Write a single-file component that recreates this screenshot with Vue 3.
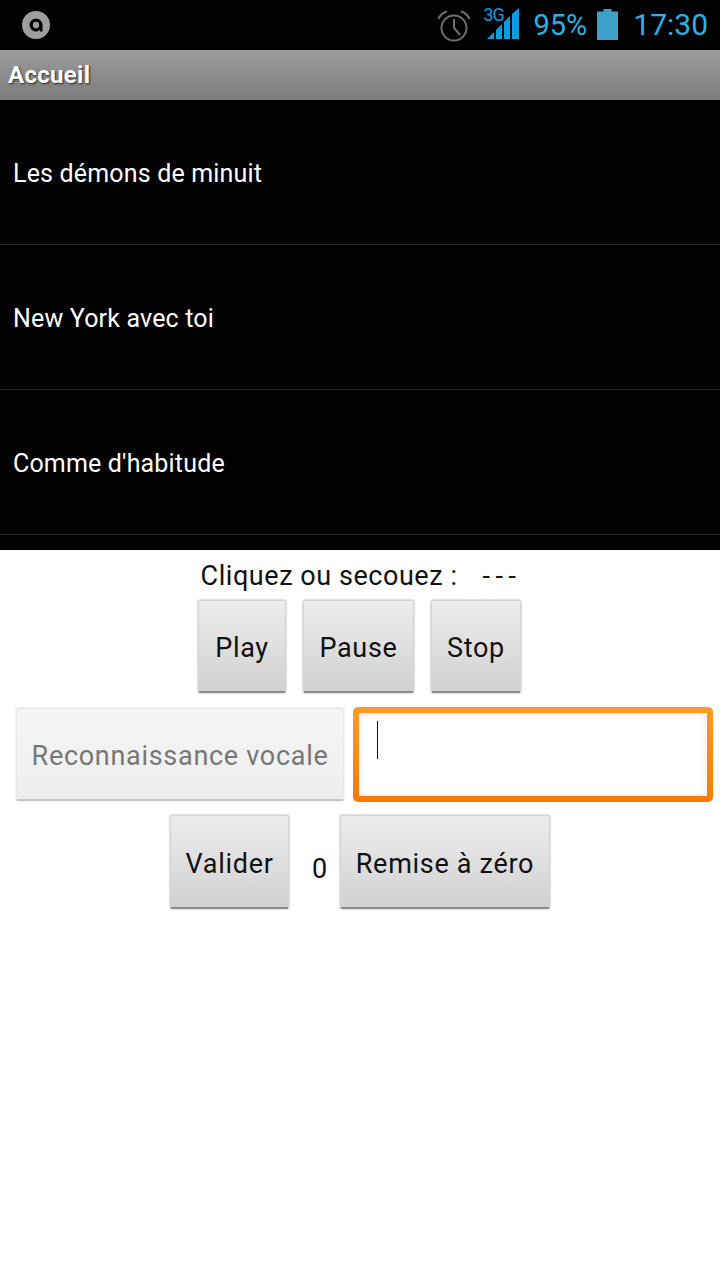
<script setup>
const songs = ['Les démons de minuit', 'New York avec toi', "Comme d'habitude"]
</script>

<template>
  <div class="screen">
    <header class="status">
      <svg class="logo" width="30" height="30" viewBox="0 0 30 30">
        <path fill-rule="evenodd" fill="#9e9e9e" d="M15 1a14 14 0 1 0 0 28a14 14 0 0 0 0-28zM15 8.500a6.500 6.500 0 0 1 6.500 6.500v6.500h-2.500v-1.400a6.500 6.500 0 1 1-4-11.600z"/>
        <circle cx="15" cy="15" r="3.200" fill="#9e9e9e"/>
      </svg>
      <div class="status-right">
        <svg class="alarm" width="34" height="34" viewBox="0 0 34 34" fill="none" stroke="#6f6f6f">
          <circle cx="17" cy="19" r="12.500" stroke-width="2"/>
          <path d="M17 10v9l6 7" stroke-width="2"/>
          <path d="M1.500 10Q4 4 10 2.500M32.500 10Q30 4 24 2.500" stroke-width="2"/>
        </svg>
        <div class="signal">
          <span class="net">3G</span>
          <svg width="33" height="32" viewBox="0 0 33 32" fill="#0a9be4">
            <path d="M0 31L7 24V31z"/>
            <path d="M9 31V22L15 16V31z"/>
            <path d="M17 31V14L23 8V31z"/>
            <path d="M25 31V6L32 0V31z"/>
          </svg>
        </div>
        <span class="pct">95%</span>
        <svg class="battery" width="21" height="31" viewBox="0 0 21 31" fill="#3f9fcb">
          <path d="M6.500 0h8v2.500h6.500V31H0V2.500h6.500z"/>
        </svg>
        <span class="clock">17:30</span>
      </div>
    </header>

    <div class="title">Accueil</div>

    <ul class="list">
      <li v-for="song in songs" :key="song">{{ song }}</li>
    </ul>

    <main class="panel">
      <div class="prompt"><span>Cliquez ou secouez :</span><span class="dashes">---</span></div>

      <div class="row row-top">
        <button class="btn play">Play</button>
        <button class="btn pause">Pause</button>
        <button class="btn stop">Stop</button>
      </div>

      <div class="row row-mid">
        <button class="btn voice" disabled>Reconnaissance vocale</button>
        <div class="field"><i class="caret"></i></div>
      </div>

      <div class="row row-bottom">
        <button class="btn valider">Valider</button>
        <span class="count">0</span>
        <button class="btn reset">Remise à zéro</button>
      </div>
    </main>
  </div>
</template>

<style scoped>
.screen {
  width: 720px;
  height: 1280px;
  display: flex;
  flex-direction: column;
  background: #fff;
  font-family: Roboto, sans-serif;
  overflow: hidden;
}
.status {
  height: 50px;
  flex: none;
  background: #000;
  display: flex;
  align-items: center;
  justify-content: space-between;
  padding: 0 12px 0 21px;
  box-sizing: border-box;
}
.status-right {
  display: flex;
  align-items: center;
}
.alarm { margin: 2px 16px 0 1px; }
.signal {
  position: relative;
  width: 33px;
  height: 32px;
  margin-right: 13px;
  margin-top: -2px;
}
.net {
  position: absolute;
  left: -4px;
  top: -2px;
  font-size: 18px;
  line-height: 18px;
  letter-spacing: -1px;
  color: #0a9be4;
}
.signal svg { display: block; }
.pct, .clock {
  color: #2cb1e6;
  font-size: 29px;
  line-height: 50px;
}
.pct { margin-right: 10px; }
.battery { margin-right: 15px; margin-top: -1px; }
.clock { font-size: 30px; }
.title {
  height: 50px;
  flex: none;
  box-sizing: border-box;
  padding-left: 8px;
  background: linear-gradient(#9c9c9c, #7c7c7c);
  color: #fff;
  font-size: 24px;
  font-weight: 700;
  letter-spacing: .3px;
  line-height: 51px;
  text-shadow: 1px 1px 2px rgba(0, 0, 0, .75);
}
.list {
  height: 450px;
  flex: none;
  margin: 0;
  padding: 0;
  list-style: none;
  background: #000;
  overflow: hidden;
}
.list li {
  height: 144px;
  box-sizing: content-box;
  border-bottom: 1px solid #262626;
  padding-left: 13px;
  color: #fff;
  font-size: 25px;
  letter-spacing: .17px;
  line-height: 147px;
}
.panel {
  flex: 1;
  display: flex;
  flex-direction: column;
  align-items: center;
}
.prompt {
  box-sizing: border-box;
  height: 50px;
  padding: 2px 0 0 2px;
  display: flex;
  gap: 25px;
  align-items: center;
  color: #111;
  font-size: 27px;
  letter-spacing: .55px;
}
.dashes { letter-spacing: 5.500px; }
.row {
  display: flex;
  justify-content: center;
}
.row-top { gap: 17px; height: 93px; margin: 0 1px 15px 0; }
.row-mid {
  gap: 9px;
  height: 93px;
  margin-bottom: 14px;
  align-self: flex-start;
  padding-left: 16px;
}
.row-bottom { height: 94px; }
.btn {
  box-sizing: border-box;
  height: 100%;
  padding: 4px 0 0;
  border: 1px solid #d4d4d4;
  border-bottom: 2px solid #8d8d8d;
  border-radius: 2px;
  background: linear-gradient(#ededed, #d1d1d1);
  box-shadow: 0 0 2px rgba(0, 0, 0, .4);
  color: #111;
  font-family: inherit;
  font-size: 27px;
  letter-spacing: .7px;
}
.play { width: 88px; }
.pause { width: 111px; }
.stop { width: 90px; }
.voice {
  width: 328px;
  background: linear-gradient(#f5f5f5, #eeeeee);
  border-color: #e8e8e8;
  border-bottom-color: #c8c8c8;
  box-shadow: 0 0 2px rgba(0, 0, 0, .18);
  color: #777;
}
.field {
  position: relative;
  width: 360px;
  margin: -1px 0 -1px;
  box-sizing: border-box;
  border: 6px solid transparent;
  border-radius: 5px;
  background:
    linear-gradient(#fff, #fff) padding-box,
    linear-gradient(#ff9c26, #f57a06) border-box;
}
.field::after {
  content: "";
  position: absolute;
  inset: 0;
  box-shadow: inset 0 1px 9px rgba(0, 0, 0, .1);
}
.caret {
  position: absolute;
  left: 18px;
  top: 8px;
  width: 1px;
  height: 38px;
  background: #111;
}
.valider { width: 119px; }
.reset { width: 210px; }
.count {
  width: 51px;
  padding: 9px 0 0 10px;
  box-sizing: border-box;
  text-align: center;
  color: #111;
  font-size: 27px;
  line-height: 90px;
}
</style>
